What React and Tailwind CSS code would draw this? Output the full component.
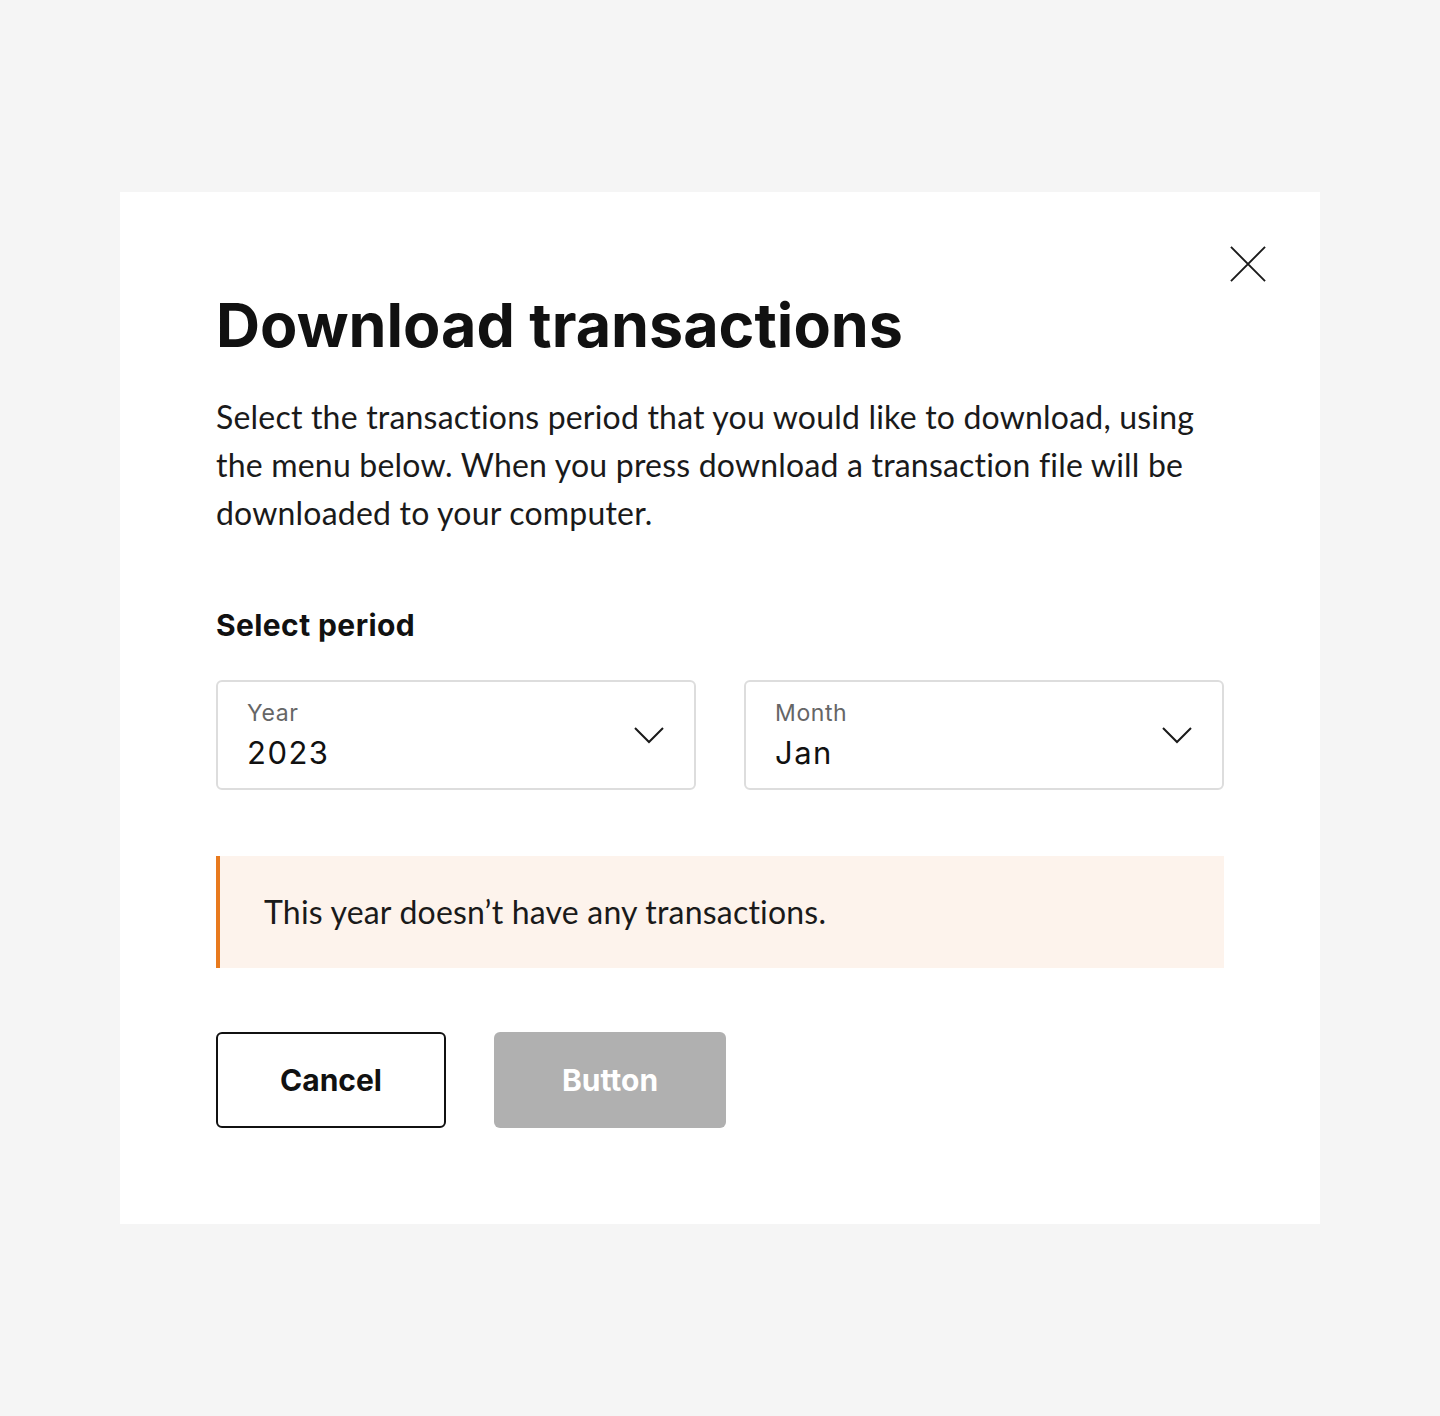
import React from 'react';

const Chevron = () => (
  <svg width="30" height="18" viewBox="0 0 30 18" fill="none" stroke="#1a1a1a" strokeWidth="2">
    <path d="M1 2l14 14L29 2" />
  </svg>
);

const Select = ({ label, value }) => (
  <div className="flex h-[110px] w-[480px] items-center justify-between rounded-[6px] border-2 border-[#dddddd] bg-white pl-[29px] pr-[30px]">
    <div className="flex flex-col">
      <span className="text-[23px] leading-[28px] tracking-[0.6px] text-[#666666]">{label}</span>
      <span className="mt-[8px] text-[31px] leading-[36px] tracking-[1.5px] text-[#111111]">{value}</span>
    </div>
    <Chevron />
  </div>
);

const App = () => {
  return (
    <div className="min-h-[1416px] bg-[#f5f5f5] pt-[192px] font-['Inter',sans-serif]">
      <div className="mx-auto w-[1200px] bg-white px-[96px] pt-[54px] pb-[96px]">
        <div className="flex justify-end">
          <button className="-mr-[42px] flex h-[36px] w-[36px] items-center justify-center">
            <svg width="38" height="38" viewBox="0 0 38 38" fill="none" stroke="#1a1a1a" strokeWidth="2">
              <path d="M1 1l36 36M37 1L1 37" />
            </svg>
          </button>
        </div>
        <h1 className="mt-[8px] text-[61px] font-bold leading-[70px] text-[#111111]">
          Download transactions
        </h1>
        <p className="mt-[33px] w-[1000px] font-['Lato',sans-serif] text-[32px] leading-[48px] tracking-[0.2px] text-[#1a1a1a]">
          Select the transactions period that you would like to download, using the menu below. When you press download a transaction file will be downloaded to your computer.
        </p>
        <h2 className="mt-[70px] text-[30px] font-bold leading-[36px] tracking-[0.4px] text-[#111111]">Select period</h2>
        <div className="mt-[37px] flex gap-[48px]">
          <Select label="Year" value="2023" />
          <Select label="Month" value="Jan" />
        </div>
        <div className="mt-[66px] flex h-[112px] items-center border-l-4 border-[#e87a1e] bg-[#fdf3ec] pl-[44px]">
          <span className="font-['Lato',sans-serif] text-[32px] tracking-[0.2px] text-[#1a1a1a]">This year doesn’t have any transactions.</span>
        </div>
        <div className="mt-[64px] flex gap-[48px]">
          <button className="h-[96px] w-[230px] rounded-[6px] border-2 border-[#111111] bg-white text-[30px] font-bold text-[#111111]">
            Cancel
          </button>
          <button className="h-[96px] w-[232px] rounded-[6px] bg-[#b0b0b0] text-[30px] font-bold text-white">
            Button
          </button>
        </div>
      </div>
    </div>
  );
};

export default App;
